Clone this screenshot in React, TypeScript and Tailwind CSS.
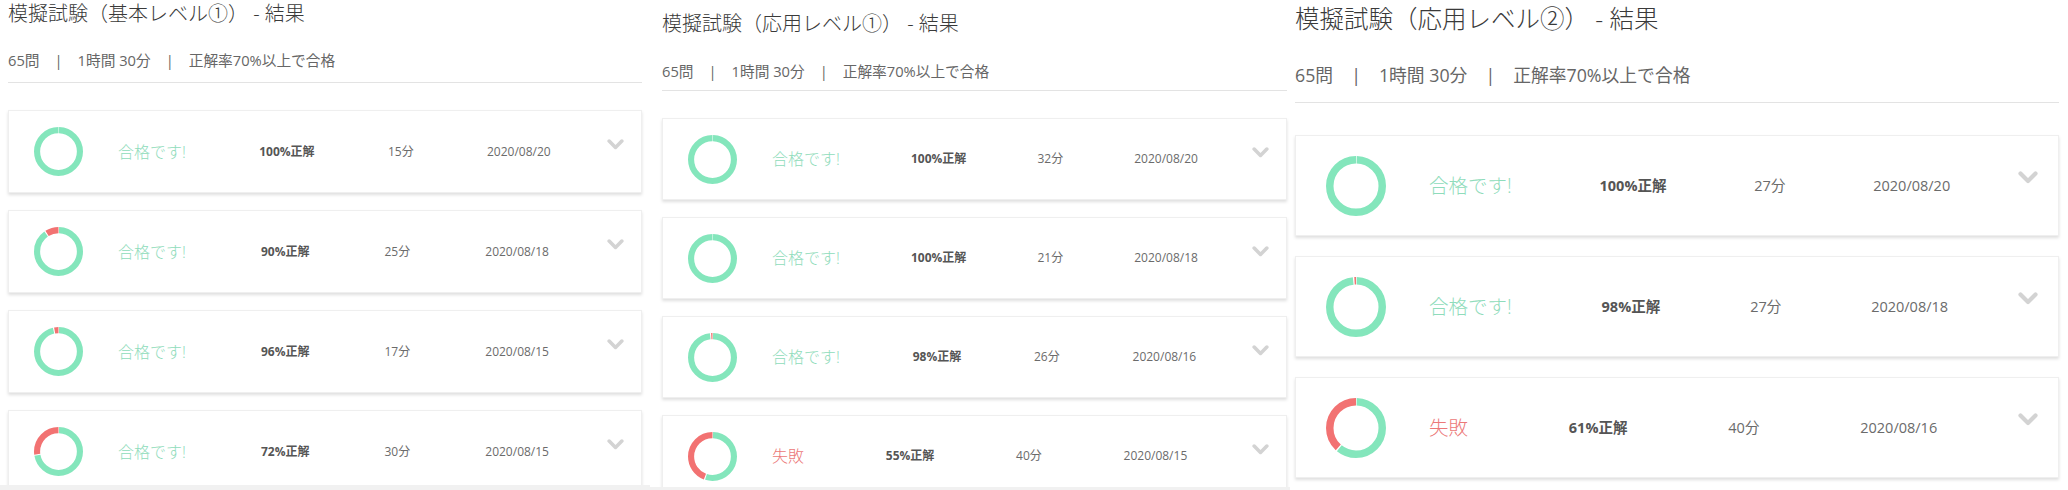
import React from "react";

type Result = { pct: number; time: string; date: string };

type Size = "md" | "lg";

const FONT = "font-['Open_Sans','Noto_Sans_CJK_JP',sans-serif]";

const sizes = {
  md: {
    title: "text-[20px] leading-[28px]",
    sub: "text-[14.7px] leading-[20px]",
    sep: "mx-[15px]",
    pad: "pl-[25px] pr-[17px]",
    donut: 49,
    donutGap: "mr-[35px]",
    status: "text-[16px]",
    pct: "text-[12px]",
    small: "text-[12px]",
    chevron: "top-[28px] right-[17px] w-[17px] h-[11px]",
  },
  lg: {
    title: "text-[24.5px] leading-[34px]",
    sub: "text-[17.8px] leading-[24px]",
    sep: "mx-[18px]",
    pad: "pl-[30px] pr-[20px]",
    donut: 60,
    donutGap: "mr-[43px]",
    status: "text-[19.5px]",
    pct: "text-[14.5px]",
    small: "text-[14.5px]",
    chevron: "top-[35px] right-[20px] w-[20px] h-[13px]",
  },
};

const panels = [
  {
    title: "模擬試験（基本レベル①） - 結果",
    size: "md" as Size,
    width: "w-[650px]",
    pad: "pl-[8px] pr-[8px] pt-0",
    subMt: "mt-[22px] pb-[12px]",
    listMt: "mt-[27px] gap-[17px]",
    card: "h-[83px]",
    content: "h-[485px]",
    strip: "h-[5px]",
    rows: [
      { pct: 100, time: "15分", date: "2020/08/20" },
      { pct: 90, time: "25分", date: "2020/08/18" },
      { pct: 96, time: "17分", date: "2020/08/15" },
      { pct: 72, time: "30分", date: "2020/08/15" },
    ],
  },
  {
    title: "模擬試験（応用レベル①） - 結果",
    size: "md" as Size,
    width: "w-[640px]",
    pad: "pl-[12px] pr-[3px] pt-[10px]",
    subMt: "mt-[23px] pb-[9px]",
    listMt: "mt-[27px] gap-[17px]",
    card: "h-[82px]",
    content: "h-[487px]",
    strip: "h-[3px]",
    rows: [
      { pct: 100, time: "32分", date: "2020/08/20" },
      { pct: 100, time: "21分", date: "2020/08/18" },
      { pct: 98, time: "26分", date: "2020/08/16" },
      { pct: 55, time: "40分", date: "2020/08/15" },
    ],
  },
  {
    title: "模擬試験（応用レベル②） - 結果",
    size: "lg" as Size,
    width: "flex-1",
    pad: "pl-[5px] pr-[9px] pt-[2px]",
    subMt: "mt-[27px] pb-[15px]",
    listMt: "mt-[32px] gap-[20px]",
    card: "h-[101px]",
    content: "h-[490px]",
    strip: "h-0",
    rows: [
      { pct: 100, time: "27分", date: "2020/08/20" },
      { pct: 98, time: "27分", date: "2020/08/18" },
      { pct: 61, time: "40分", date: "2020/08/16" },
    ],
  },
];

const Donut = ({ pct, size }: { pct: number; size: number }) => {
  const r = 43.75;
  const c = 2 * Math.PI * r;
  const gap = 2.2;
  const green = (pct / 100) * c;
  const red = c - green;
  return (
    <svg width={size} height={size} viewBox="0 0 100 100" className="shrink-0 -rotate-90">
      <circle
        cx="50"
        cy="50"
        r={r}
        fill="none"
        stroke="#84e6bc"
        strokeWidth="12.5"
        strokeDasharray={`${green - gap} ${c}`}
        strokeDashoffset={-gap / 2}
      />
      {red > 0 && (
        <circle
          cx="50"
          cy="50"
          r={r}
          fill="none"
          stroke="#f27272"
          strokeWidth="12.5"
          strokeDasharray={`${Math.max(red - gap, 0.8)} ${c}`}
          strokeDashoffset={-(green + gap / 2)}
        />
      )}
    </svg>
  );
};

const ResultCard = ({ row, size, card }: { row: Result; size: Size; card: string }) => {
  const s = sizes[size];
  const passed = row.pct >= 70;
  return (
    <div
      className={`relative flex items-center bg-white border border-[#efefef] shadow-[0_2px_3px_rgba(0,0,0,0.13)] shrink-0 ${card} ${s.pad}`}
    >
      <div className={s.donutGap}>
        <Donut pct={row.pct} size={s.donut} />
      </div>
      <div className="flex flex-1 items-center whitespace-nowrap">
        <span className={`flex-auto font-light ${s.status} ${passed ? "text-[#8fdcbb]" : "text-[#ec7878]"}`}>
          {passed ? "合格です!" : "失敗"}
        </span>
        <span className={`flex-auto font-bold text-[#555] ${s.pct}`}>{row.pct}%正解</span>
        <span className={`flex-auto text-[#6b6b6b] ${s.small}`}>{row.time}</span>
        <span className={`flex-auto text-[#6b6b6b] ${s.small}`}>{row.date}</span>
      </div>
      <svg viewBox="0 0 20 13" fill="none" className={`absolute ${s.chevron}`}>
        <path
          d="M2.5 2.5 L10 10 L17.5 2.5"
          stroke="#d3d3d3"
          strokeWidth="4.2"
          strokeLinecap="round"
          strokeLinejoin="round"
        />
      </svg>
    </div>
  );
};

const App = () => {
  return (
    <div className={`flex w-[2068px] h-[490px] overflow-hidden bg-white ${FONT}`}>
      {panels.map((p) => {
        const s = sizes[p.size];
        return (
          <div key={p.title} className={`flex flex-col h-[490px] ${p.width}`}>
            <div className={`flex flex-col overflow-hidden ${p.content} ${p.pad}`}>
              <h1 className={`font-light text-[#3a3a3a] whitespace-nowrap ${s.title}`}>{p.title}</h1>
              <div className={`border-b border-[#e3e3e3] text-[#666] whitespace-nowrap ${s.sub} ${p.subMt}`}>
                <span>65問</span>
                <span className={s.sep}>|</span>
                <span>1時間 30分</span>
                <span className={s.sep}>|</span>
                <span>正解率70%以上で合格</span>
              </div>
              <div className={`flex flex-col ${p.listMt}`}>
                {p.rows.map((row, i) => (
                  <ResultCard key={i} row={row} size={p.size} card={p.card} />
                ))}
              </div>
            </div>
            <div className={`bg-[#f1f1f1] ${p.strip}`} />
          </div>
        );
      })}
    </div>
  );
};

export default App;
